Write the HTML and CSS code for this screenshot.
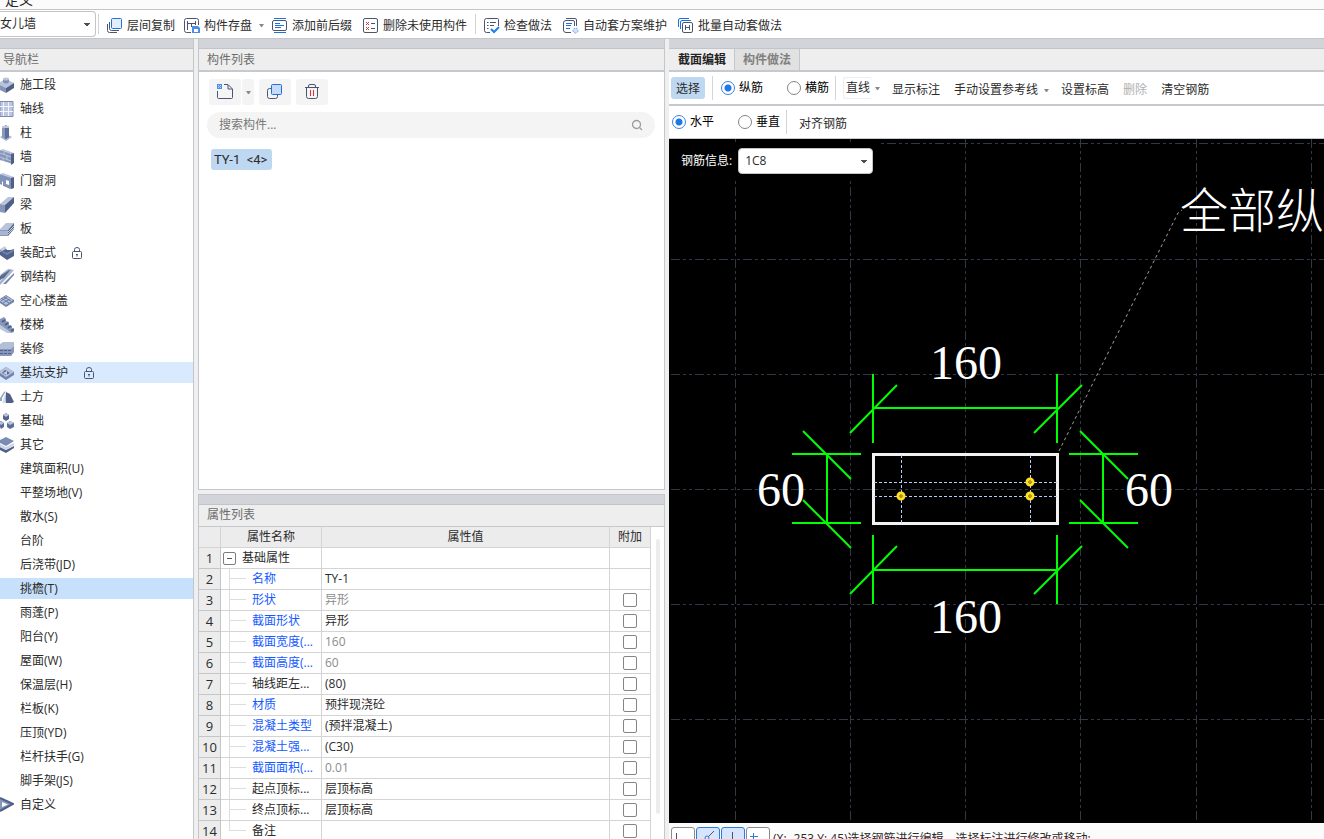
FILE: index.html
```html
<!DOCTYPE html>
<html lang="zh-CN">
<head>
<meta charset="utf-8">
<title>定义</title>
<link rel="stylesheet" href="styles.css">
</head>
<body>
<div class="app">
  <header class="titlebar"><span>定义</span></header>

  <div class="toolbar">
    <select class="combo type-combo" aria-label="构件类型"><option>女儿墙</option></select>
    <span class="sep"></span>
    <button class="tool"><svg width="16" height="16" viewBox="0 0 16 16" fill="none" stroke="#4c5570"><path d="M.5 6v6.500q0 2 2 2H10M2.500 4v6.500q0 2 2 2H12"/><rect x="4.500" y=".500" width="10" height="10" rx="1" fill="#e3edfc" stroke="#1e6fe0"/></svg>层间复制</button>
    <button class="tool snug"><svg width="16" height="16" viewBox="0 0 16 16" fill="none" stroke="#4c5570"><path d="M7 14.500H2.500q-2 0-2-2v-10q0-2 2-2h10q2 0 2 2V7M3.500 12V3M11.500 7V3M3.500 5.500h8M7.500 9V6"/><path d="M8 8h6l2 2v5H8z" fill="#4a8ee8" stroke="none"/><path d="M10 11h4v3h-4z" fill="#fff" stroke="none"/></svg>构件存盘<i class="caret"></i></button>
    <button class="tool"><svg width="16" height="16" viewBox="0 0 16 16" fill="none" stroke="#1e6fe0"><path d="M2 .5h12M2 14.500h12"/><rect x=".500" y="2.500" width="14" height="10" rx="1.500" stroke="#4c5570"/><path d="M3 5.500h5M3 7.500h9M3 9.500h6"/></svg>添加前后缀</button>
    <button class="tool"><svg width="16" height="16" viewBox="0 0 16 16" fill="none" stroke="#4c5570"><rect x=".500" y=".500" width="14" height="14" rx="1.500"/><path d="M8 5.500h4M8 10.500h4"/><path d="M3 4l3 3M6 4L3 7M3 9l3 3M6 9l-3 3" stroke="#dc2f36"/></svg>删除未使用构件</button>
    <span class="sep"></span>
    <button class="tool"><svg width="16" height="16" viewBox="0 0 16 16" fill="none" stroke="#4c5570"><path d="M6 14.500H2.500q-2 0-2-2v-10q0-2 2-2h11q1 0 1 1V8"/><path d="M3 4.500h1.500M6 4.500h6M3 7.500h1.500M6 7.500h4M3 10.500h1.500"/><path d="M7 11l3 3 5-5" stroke="#1e80f0" stroke-width="2"/></svg>检查做法</button>
    <button class="tool"><svg width="16" height="16" viewBox="0 0 16 16" fill="none" stroke="#4c5570"><path d="M8 14.500H3q-2.500 0-2.500-2.500V5q0-2.500 2.500-2.500h7q1.500 0 1.500 1.500v4M3 .5h9q1.500 0 1.500 1.500v6"/><path d="M3 5.500h6M3 7.500h5M3 10.500h4" stroke="#1e6fe0"/><circle cx="12.500" cy="12.500" r="2.500" fill="#cfe2fa" stroke="#6fa6eb" stroke-dasharray="2 1"/></svg>自动套方案维护</button>
    <button class="tool"><svg width="16" height="16" viewBox="0 0 16 16" fill="none" stroke="#1e6fe0"><path d="M.5 9V2q0-1.500 1.500-1.500h9M2.500 11V4q0-1.500 1.500-1.500h9"/><rect x="4.500" y="4.500" width="10" height="10" rx="1.500" stroke="#4c5570"/><path d="M7.500 7v5M11.500 7v5M7.500 9.500h4" stroke="#4c5570"/></svg>批量自动套做法</button>
  </div>

  <main class="work">
    <nav class="panel nav">
      <div class="grip"></div>
      <h2 class="head">导航栏</h2>
      <ul class="tree">
        <li><svg viewBox="0 0 14 16"><path d="M0 5l6-3 8 4-8 5-6-3z" fill="#b9c3da"/><path d="M0 8l6 3v5l-6-3z" fill="#8493b8"/><path d="M14 6v5l-8 5v-5z" fill="#4f6088"/><path d="M3 2v3q3 3 6 0V2z" fill="#7f90b6"/><ellipse cx="6" cy="2" rx="3" ry="1.500" fill="#b9c3da"/></svg>施工段</li>
        <li><svg viewBox="0 0 14 16"><path d="M0 .5h13v15H0z" fill="#bdc8e0" stroke="#7d8cb2"/><path d="M3.500 1v14M8.500 1v14M0 5.500h13M0 10.500h13" stroke="#f2f5fb"/></svg>轴线</li>
        <li><svg viewBox="0 0 14 16"><path d="M0 12l6-3 6 3-6 4z" fill="#a7b3cf"/><path d="M2 2l4-2 3 2v10l-3 2-4-2z" fill="#8997bb"/><path d="M5 3h4v9l-3 2H5z" fill="#5d6e98"/><path d="M2 1h7v2H2z" fill="#bec8dc"/></svg>柱</li>
        <li><svg viewBox="0 0 14 16"><path d="M0 1l13 4v10L0 11z" fill="#8796ba"/><path d="M0 1l3-1 11 4-3 1z" fill="#bcc6dc"/><path d="M11 5l3-1v10l-3 2z" fill="#4f6088"/><path d="M0 4l11 4M0 8l11 4M4 3v3M7 7v4M3 9v3" stroke="#b8c3da"/></svg>墙</li>
        <li><svg viewBox="0 0 14 16"><path d="M0 1l13 4v10l-3 1-4-2-3-1V9L2 8v4l-2-1z" fill="#8192b9"/><path d="M0 1l3-1 11 4-3 1z" fill="#bcc6dc"/><path d="M11 5l3-1v11l-3 1z" fill="#4f6088"/><path d="M6 7l3 1v4l-3-1z" fill="#fff"/></svg>门窗洞</li>
        <li><svg viewBox="0 0 14 16"><path d="M0 7l8-7h6L5 8z" fill="#b9c3da"/><path d="M0 7l5 1v8l-5-1z" fill="#8796ba"/><path d="M14 0v6l-9 10V8z" fill="#4f6088"/></svg>梁</li>
        <li><svg viewBox="0 0 14 16"><path d="M0 8l6-6h8l-6 7H0z" fill="#b9c3da"/><path d="M0 9h8v6H0z" fill="#8a99bd"/><path d="M14 2v6l-6 7V9z" fill="#56678f"/><path d="M0 11h8l6-6M0 13h8l6-6" stroke="#c9d2e5" fill="none"/></svg>板</li>
        <li class="locked"><svg viewBox="0 0 14 16"><path d="M0 5l5-3 2 3 4 0 3-1v7l-7 4-7-5z" fill="#51628c"/><path d="M0 4l5-3 1 3-6 3z" fill="#c6cfe1"/><path d="M7 8l7-4v2l-7 4-7-4V5z" fill="#7284ad"/></svg>装配式<svg class="lock" viewBox="0 0 10 12"><path d="M2.500 4V2.500q0-2 2.500-2t2.500 2V4" /><rect x=".500" y="4.500" width="9" height="7" rx="1"/><path d="M5 7v2.500M4 7.500h2"/></svg></li>
        <li><svg viewBox="0 0 14 16"><path d="M0 6l8-6 6 1-9 10-5 5v-4l4-3z" fill="#a8b4cf"/><path d="M0 7l11-7-7 9-4 2z" fill="#596a95"/><path d="M3 15l11-11v2L6 15z" fill="#7484aa"/></svg>钢结构</li>
        <li><svg viewBox="0 0 14 16"><path d="M0 6l6-4 8 5v2l-8 5-6-4z" fill="#6f80aa"/><path d="M0 7l6-4 7 4-7 5-6-4z" fill="#b9c4da"/><path d="M1 8l6-4M3 10l7-4M1 5l8 5M4 4l7 4" stroke="#6879a3"/></svg>空心楼盖</li>
        <li><svg viewBox="0 0 14 16"><path d="M0 2l4-2 2 2v2l3 1v3l3 1v2l2 1v3l-3 1-11-8z" fill="#8796ba"/><path d="M0 8l11 8H7L0 12z" fill="#bcc6dc"/><path d="M5 3L2 5M8 6L5 8M11 9l-3 2M14 12l-3 2" stroke="#4f6088" stroke-width="2"/></svg>楼梯</li>
        <li><svg viewBox="0 0 14 16"><path d="M0 3l3-2h11v10l-3 4H0z" fill="#b3bed7"/><path d="M0 8h11l3-3v6l-3 4H0z" fill="#8796ba"/><path d="M0 9.500h12M0 12.500h11" stroke="#51628c" stroke-dasharray="3 1"/></svg>装修</li>
        <li class="hover locked"><svg viewBox="0 0 14 16"><path d="M0 6l6-4 8 5v3l-8 5-6-4z" fill="#7283ac"/><path d="M0 6l6-4 8 5-8 5-6-4z" fill="#b6c1d9"/><path d="M2 8l3-3 5 3-4 2z" fill="#54658f"/><path d="M3 8l4-2v4z" fill="#c9d3e6"/></svg>基坑支护<svg class="lock" viewBox="0 0 10 12"><path d="M2.500 4V2.500q0-2 2.500-2t2.500 2V4" /><rect x=".500" y="4.500" width="9" height="7" rx="1"/><path d="M5 7v2.500M4 7.500h2"/></svg></li>
        <li><svg viewBox="0 0 14 16"><path d="M0 9l4-6 2-1-4 7v3H0z" fill="#93a2c4"/><path d="M6 3l4 2 4 8-2 1H5z" fill="#4f6088"/><path d="M5 5l1 9H2z" fill="#d5dcec"/></svg>土方</li>
        <li><svg viewBox="0 0 14 16"><path d="M3 2l3-2 3 2v4L6 8 3 6z" fill="#51628c"/><path d="M3 2l3-2 3 2-3 2z" fill="#b9c3da"/><path d="M-2 10l3-2 3 2v4l-3 2zM7 10l3-2 4 2v4l-4 2-3-2z" fill="#5c6d97"/><path d="M0 9l2 0 2 1-3 2-1-1zM7 10l3-2 4 2-4 2z" fill="#b9c3da"/></svg>基础</li>
        <li><svg viewBox="0 0 14 16"><path d="M0 10l6 3 8-4v2l-8 5-6-3z" fill="#4f6088"/><path d="M0 7l6 3 8-4v2l-8 5-6-3z" fill="#cbd4e6"/><path d="M0 3l6-3 8 4-8 5-6-3z" fill="#7b8cb4"/></svg>其它</li>
        <li class="sub">建筑面积(U)</li>
        <li class="sub">平整场地(V)</li>
        <li class="sub">散水(S)</li>
        <li class="sub">台阶</li>
        <li class="sub">后浇带(JD)</li>
        <li class="sub current">挑檐(T)</li>
        <li class="sub">雨蓬(P)</li>
        <li class="sub">阳台(Y)</li>
        <li class="sub">屋面(W)</li>
        <li class="sub">保温层(H)</li>
        <li class="sub">栏板(K)</li>
        <li class="sub">压顶(YD)</li>
        <li class="sub">栏杆扶手(G)</li>
        <li class="sub">脚手架(JS)</li>
        <li><svg viewBox="0 0 14 16"><path d="M0 1l13 6L0 14z" fill="#8796ba"/><path d="M2 5l6 2.500L2 10z" fill="#fff"/><path d="M0 1l13 6-13 7" fill="none" stroke="#4f6088" stroke-width="2"/></svg>自定义</li>
      </ul>
    </nav>

    <div class="middle">
      <section class="panel components">
        <div class="grip"></div>
        <h2 class="head">构件列表</h2>
        <div class="actions">
          <div class="split">
            <button aria-label="新建"><svg width="16" height="16" viewBox="0 0 16 16" fill="none" stroke="#4c5570"><path d="M.5 7v6.500q0 1 1 1h13q1 0 1-1V5L11 .500H7M11 1v4h4"/><path d="M0 0h5v5H0z" fill="#4a90e8" stroke="none"/><path d="M1 1h1v1H1zM3 1h1v1H3zM2 2h1v1H2zM1 3h1v1H1zM3 3h1v1H3z" fill="#b8d4f7" stroke="none"/></svg></button>
            <button class="more" aria-label="更多"><i class="caret"></i></button>
          </div>
          <button aria-label="复制"><svg width="16" height="16" viewBox="0 0 16 16" fill="none" stroke="#4c5570"><path d="M4 4.500H2.500q-2 0-2 2v6q0 2 2 2h6q2 0 2-2V11"/><rect x="4.500" y=".500" width="10" height="10" rx="1" fill="#c6dbf5" stroke="#1e6fe0"/></svg></button>
          <button aria-label="删除构件"><svg width="16" height="16" viewBox="0 0 16 16" fill="none" stroke="#4c5570"><path d="M1 3.500h14M4.500 3V2q0-1.500 1.500-1.500h4q1.500 0 1.500 1.500v1M2.500 4v8.500q0 2 2 2h7q2 0 2-2V4"/><path d="M6.500 6v6M9.500 6v6" stroke="#dc2f36"/></svg></button>
        </div>
        <label class="search">
          <input type="text" placeholder="搜索构件..." aria-label="搜索构件">
          <svg width="12" height="12" viewBox="0 0 12 12" fill="none" stroke="#9c9c9c" stroke-width="1.300"><circle cx="5.500" cy="5.500" r="4"/><path d="M8 8l3 3"/></svg>
        </label>
        <button class="chip">TY-1  &lt;4&gt;</button>
      </section>

      <section class="panel props">
        <div class="grip"></div>
        <h2 class="head">属性列表</h2>
        <div class="grid-wrap">
          <table>
            <colgroup><col class="c-num"><col class="c-name"><col><col class="c-add"></colgroup>
            <thead><tr><th></th><th>属性名称</th><th>属性值</th><th>附加</th></tr></thead>
            <tbody>
              <tr><th>1</th><td class="group"><button aria-label="折叠"></button>基础属性</td><td></td><td></td></tr>
              <tr><th>2</th><td class="leaf key">名称</td><td>TY-1</td><td></td></tr>
              <tr><th>3</th><td class="leaf key">形状</td><td class="dim">异形</td><td><input type="checkbox" aria-label="形状"></td></tr>
              <tr><th>4</th><td class="leaf key">截面形状</td><td>异形</td><td><input type="checkbox" aria-label="截面形状"></td></tr>
              <tr><th>5</th><td class="leaf key">截面宽度(...</td><td class="dim">160</td><td><input type="checkbox" aria-label="截面宽度"></td></tr>
              <tr><th>6</th><td class="leaf key">截面高度(...</td><td class="dim">60</td><td><input type="checkbox" aria-label="截面高度"></td></tr>
              <tr><th>7</th><td class="leaf">轴线距左...</td><td>(80)</td><td><input type="checkbox" aria-label="轴线距左"></td></tr>
              <tr><th>8</th><td class="leaf key">材质</td><td>预拌现浇砼</td><td><input type="checkbox" aria-label="材质"></td></tr>
              <tr><th>9</th><td class="leaf key">混凝土类型</td><td>(预拌混凝土)</td><td><input type="checkbox" aria-label="混凝土类型"></td></tr>
              <tr><th>10</th><td class="leaf key">混凝土强...</td><td>(C30)</td><td><input type="checkbox" aria-label="混凝土强"></td></tr>
              <tr><th>11</th><td class="leaf key">截面面积(...</td><td class="dim">0.01</td><td><input type="checkbox" aria-label="截面面积"></td></tr>
              <tr><th>12</th><td class="leaf">起点顶标...</td><td>层顶标高</td><td><input type="checkbox" aria-label="起点顶标"></td></tr>
              <tr><th>13</th><td class="leaf">终点顶标...</td><td>层顶标高</td><td><input type="checkbox" aria-label="终点顶标"></td></tr>
              <tr><th>14</th><td class="leaf last">备注</td><td></td><td><input type="checkbox" aria-label="备注"></td></tr>
            </tbody>
          </table>
          <div class="scroll"></div>
        </div>
      </section>
    </div>

    <section class="panel editor">
      <div class="grip"></div>
      <div class="tabs"><button class="active">截面编辑</button><button>构件做法</button></div>
      <div class="bar">
        <button class="on">选择</button>
        <span class="sep"></span>
        <label class="radio"><input type="radio" name="bar" checked>纵筋</label>
        <label class="radio"><input type="radio" name="bar">横筋</label>
        <span class="sep"></span>
        <button class="boxed">直线</button><i class="caret"></i>
        <button class="text">显示标注</button>
        <button class="text with-menu">手动设置参考线<i class="caret"></i></button>
        <button class="text">设置标高</button>
        <button class="text" disabled>删除</button>
        <button class="text">清空钢筋</button>
      </div>
      <div class="bar second">
        <label class="radio"><input type="radio" name="dir" checked>水平</label>
        <label class="radio"><input type="radio" name="dir">垂直</label>
        <span class="sep"></span>
        <button class="text">对齐钢筋</button>
      </div>
      <div class="canvas">
        <svg class="drawing">
          <g transform="translate(-669 -139)" fill="none">
            <g stroke="#303845" stroke-dasharray="9 3 3 3 3 3">
              <path d="M735.500 139V823M850.500 139V823M965.500 139V823M1080.500 139V823M1196.500 139V823M1311.500 139V823"/>
              <path d="M671 143.500H2400M671 259.500H2400M671 374.500H2400M671 489.500H2400M671 604.500H2400M671 719.500H2400"/>
            </g>
            <path d="M1059 451L1178 213L1182 210" stroke="#a0a0a0" stroke-dasharray="3 3"/>
            <g stroke="#00ff00" stroke-width="2">
              <path d="M873 374V443M1057 374V443M873 408H1057M850 433L897 385M1034 433L1082 385"/>
              <path d="M873 535V604M1057 535V604M873 570H1057M850 594L897 546M1034 594L1082 546"/>
              <path d="M792 454H861M792 523H861M827 454V523M803 431L851 479M803 500L851 548"/>
              <path d="M1069 454H1138M1069 523H1138M1103 454V523M1080 431L1128 479M1080 500L1128 548"/>
            </g>
            <rect x="873.500" y="454.500" width="184" height="69" stroke="#f2f2f2" stroke-width="3"/>
            <path d="M901.500 455V523M1030.500 455V523M874 482.500H1058M874 496.500H1058" stroke="#b4cdf2" stroke-dasharray="3 2"/>
            <g fill="#141414" stroke="#ffe022" stroke-width="3">
              <circle cx="901" cy="496" r="3"/><circle cx="1030" cy="482" r="3"/><circle cx="1030" cy="496" r="3"/>
            </g>
            <g fill="#b09a20"><rect x="900" y="495" width="2" height="2"/><rect x="1029" y="481" width="2" height="2"/><rect x="1029" y="495" width="2" height="2"/></g>
            <g class="dims">
              <text x="966" y="379">160</text>
              <text x="966" y="633">160</text>
              <text x="781" y="506">60</text>
              <text x="1149" y="506">60</text>
              <text class="note" x="1180" y="228">全部纵筋</text>
            </g>
          </g>
        </svg>
        <div class="info"><label for="rebar">钢筋信息:</label><select id="rebar" class="combo"><option>1C8</option></select></div>
      </div>
      <footer class="status">
        <button aria-label="正交"><svg viewBox="0 0 22 22"><path d="M4.500 5v12h11"/></svg></button>
        <button class="on" aria-label="斜线"><svg viewBox="0 0 22 22"><path d="M17 3l-6 6"/><circle cx="10" cy="10" r="2" stroke="#2b7de1"/></svg></button>
        <button class="on" aria-label="垂线"><svg viewBox="0 0 22 22"><path d="M10.500 4v12M4 16.500h13"/></svg></button>
        <button aria-label="交点"><svg viewBox="0 0 22 22"><path d="M6.500 5v8M3 8.500h8" stroke="#2b7de1"/></svg></button>
        <span>(X: -253 Y: 45)选择钢筋进行编辑，选择标注进行修改或移动;</span>
      </footer>
    </section>
  </main>
</div>
</body>
</html>
```
FILE: styles.css
```css
* { box-sizing: border-box; }

body {
  margin: 0;
  height: 100vh;
  overflow: hidden;
  background: #fff;
  color: #2b2b2b;
  font: 12px/20px "Open Sans", "Noto Sans CJK SC", sans-serif;
}

button, input, select { font: inherit; color: inherit; margin: 0; }
button { border: 0; padding: 0; background: none; white-space: nowrap; }
h2 { margin: 0; font-size: 12px; font-weight: 400; }
svg { display: block; flex: none; }

.app {
  display: flex;
  flex-direction: column;
  height: calc(100vh + 12px);
}

.titlebar {
  display: flex;
  align-items: flex-end;
  flex: none;
  height: 10px;
  padding-left: 5px;
  overflow: hidden;
  background: #fbfbfb;
  border-bottom: 1px solid #c5c5c5;
  font-size: 14px;
  line-height: 18px;
}

.caret {
  display: block;
  flex: none;
  width: 5px;
  border: 3px solid transparent;
  border-width: 3px 2px 0;
  border-top-color: #8a8a8a;
}

.sep { flex: none; width: 1px; height: 20px; background: #d4d4d4; }

/* Main toolbar */
.toolbar {
  display: flex;
  align-items: center;
  flex: none;
  gap: 11px;
  height: 28px;
}
.tool { display: flex; align-items: center; gap: 4px; padding-top: 3px; }
.tool .caret { margin: 0 -3px 0 3px; }
.snug { margin-left: -2px; }
.toolbar .sep + .tool { margin-left: -3px; }
.toolbar .tool + .sep { margin-left: -3px; }

.combo {
  appearance: none;
  height: 26px;
  padding: 0 6px;
  border: 1px solid #c4c4c4;
  border-radius: 4px;
  background-color: #fff;
  background-image: linear-gradient(to bottom left, #4a4f5c 50%, transparent 51%), linear-gradient(to bottom right, #4a4f5c 50%, transparent 51%);
  background-size: 3px 3px;
  background-position: right 8px center, right 5px center;
  background-repeat: no-repeat;
  color: #2b2b2b;
}
.type-combo {
  width: 96px;
  margin-right: -9px;
  padding-left: 0;
  border-left: 0;
  border-radius: 0 4px 4px 0;
}

/* Panels */
.work {
  display: flex;
  flex: 1;
  min-height: 0;
  gap: 4px;
  background: #efefef;
  border-top: 1px solid #c3c6cb;
}
.panel {
  display: flex;
  flex-direction: column;
  min-width: 0;
  background: #fff;
  border-left: 1px solid #c3c6cb;
  border-right: 1px solid #c3c6cb;
}
.grip { flex: none; height: 10px; background: #d3d4da; border-bottom: 1px solid #c0c4cb; }
.head {
  flex: none;
  height: 23px;
  padding-left: 8px;
  background: #eee;
  border-bottom: 2px solid #c6c9ce;
  color: #6c6c6c;
  line-height: 21px;
}

/* Navigation */
.nav { flex: none; width: 194px; border-left: 0; }
.nav .head { padding-left: 3px; }
.tree { margin: 0; padding: 2px 0 0; list-style: none; }
.tree li {
  display: flex;
  align-items: center;
  gap: 6px;
  height: 21px;
  margin-bottom: 3px;
  line-height: 21px;
}
.tree li > svg { width: 14px; height: 16px; }
.tree .sub { padding-left: 20px; }
.tree .hover { background: #d9eaff; }
.tree .current { background: #c7e0fb; }
.tree li > .lock { width: 10px; height: 12px; margin-left: 10px; fill: none; stroke: #4c5570; }

/* Component list */
.middle { display: flex; flex-direction: column; flex: none; gap: 4px; width: 467px; }
.components { flex: 1; min-height: 0; border-bottom: 1px solid #c3c6cb; }
.actions { display: flex; gap: 5px; padding: 7px 10px; }
.actions button {
  display: flex;
  align-items: center;
  justify-content: center;
  width: 32px;
  height: 26px;
  border-radius: 3px;
  background: #f4f4f4;
}
.split { display: flex; gap: 1px; }
.actions .more { width: 12px; }
.search {
  display: flex;
  align-items: center;
  height: 26px;
  margin: 0 9px 0 8px;
  padding: 0 12px;
  border-radius: 13px;
  background: #f4f4f4;
}
.search input { flex: 1; min-width: 0; padding: 0; border: 0; outline: 0; background: none; }
.search input::placeholder { color: #777; }
.chip {
  align-self: flex-start;
  height: 21px;
  margin: 11px 0 0 12px;
  padding: 0 5px 0 3px;
  border-radius: 3px;
  background: #bfd8f2;
  font-family: Roboto, sans-serif;
  font-size: 13px;
  line-height: 21px;
  white-space: pre;
}

/* Property grid */
.props { flex: none; height: 357px; border-top: 1px solid #c3c6cb; }
.props .head { height: 22px; line-height: 20px; border-bottom-width: 1px; }
.grid-wrap { display: flex; gap: 5px; flex: 1; min-height: 0; padding-right: 4px; overflow: hidden; }
.scroll { flex: none; width: 4px; height: 275px; margin-top: 12px; border-radius: 2px; background: #ececec; }
table { flex: 1; width: 100%; align-self: flex-start; table-layout: fixed; border-collapse: separate; border-spacing: 0; }
.c-num { width: 22px; }
.c-name { width: 101px; }
.c-add { width: 41px; }
th, td {
  height: 21px;
  padding: 0 3px;
  border-right: 1px solid #d4d4d4;
  border-bottom: 1px solid #d4d4d4;
  overflow: hidden;
  font-weight: 400;
  line-height: 20px;
  text-align: left;
  white-space: nowrap;
}
th { padding: 0; background: #ececec; text-align: center; }
tbody th { font-size: 13px; border-color: #c6c6c6; }
.key { color: #1459ff; }
.dim { color: #8c8c8c; }
.leaf {
  padding-left: 31px;
  background: linear-gradient(#ddd, #ddd) 8px 0 / 1px 100% no-repeat, linear-gradient(#ddd, #ddd) 8px 9px / 17px 1px no-repeat;
}
.leaf.last { background-size: 1px 10px, 17px 1px; }
.group { padding-left: 2px; }
.group button {
  width: 13px;
  height: 13px;
  margin-right: 6px;
  border: 1px solid #7d7d7d;
  border-radius: 2px;
  background: linear-gradient(#555, #555) center / 5px 1px no-repeat;
  vertical-align: -2px;
}
td input {
  appearance: none;
  display: block;
  width: 14px;
  height: 14px;
  margin: 0 auto;
  border: 1px solid #858585;
  border-radius: 2px;
}

/* Section editor */
.editor { flex: 1; border-left: 0; border-right: 0; }
.tabs { display: flex; flex: none; height: 23px; background: #eee; border-bottom: 2px solid #c6cacf; }
.tabs button {
  padding: 0 8px;
  border-right: 1px solid #c3c6cb;
  background: #e1e1e1;
  color: #808080;
  font-weight: 700;
  line-height: 21px;
}
.tabs .active { padding-left: 9px; background: #eee; color: #222; }
.bar {
  display: flex;
  align-items: center;
  flex: none;
  height: 34px;
  padding: 0 2px;
  border-bottom: 2px solid #c6cacf;
}
.bar.second { height: 33px; padding-left: 3px; border-bottom-width: 1px; }
.bar .sep { height: 24px; margin: 0 8px 0 6px; }
.bar .on + .sep { margin-left: 7px; }
.bar .on { padding: 1px 5px 0; height: 22px; border-radius: 3px; background: #bfd8f2; line-height: 22px; }
.radio { display: flex; align-items: center; gap: 4px; height: 30px; color: #000; }
.radio + .radio { margin-left: 24px; }
.radio input {
  appearance: none;
  width: 14px;
  height: 14px;
  border: 1px solid #858585;
  border-radius: 50%;
}
.radio input:checked { border-color: #3c82d8; background: radial-gradient(circle, #1e78e6 3px, transparent 4px); }
.bar .boxed { padding: 0 2px; margin: 0 3px 0 -1px; border: 1px solid #ececec; border-right: 0; border-radius: 3px; }
.bar .text { margin-left: 14px; padding-top: 4px; }
.bar .caret + .text { margin-left: 12px; }
.with-menu { display: flex; align-items: center; gap: 6px; }
.bar .with-menu + .text { margin-left: 12px; }
.bar .text:disabled { color: #b0b0b0; }
.bar.second .sep + .text { margin-left: 4px; }

.canvas { position: relative; flex: 1; min-height: 0; overflow: hidden; background: #000; }
.drawing { width: 100%; height: 100%; }
.dims {
  fill: #fff;
  font-family: "Liberation Serif", serif;
  font-size: 48px;
  text-anchor: middle;
}
.dims .note { font-family: "Noto Sans CJK SC", sans-serif; font-weight: 300; text-anchor: start; }
.info {
  position: absolute;
  top: 3px;
  left: 0;
  display: flex;
  align-items: center;
  gap: 6px;
  height: 38px;
  padding: 0 8px 0 12px;
  background: #000;
  color: #fff;
}
.info .combo { width: 135px; }

.status {
  display: flex;
  align-items: center;
  flex: none;
  gap: 1px;
  height: 28px;
  padding: 3px 2px 0;
  background: #fbfbfb;
  white-space: nowrap;
}
.status button { width: 24px; height: 24px; border: 1px solid #8c8c8c; border-radius: 3px; background: #fff; }
.status .on { border-color: #2b7de1; background: #d6e5fb; }
.status svg { width: 22px; height: 22px; fill: none; stroke: #4c5570; }
.status span { margin-left: 2px; padding-top: 1px; }
```
